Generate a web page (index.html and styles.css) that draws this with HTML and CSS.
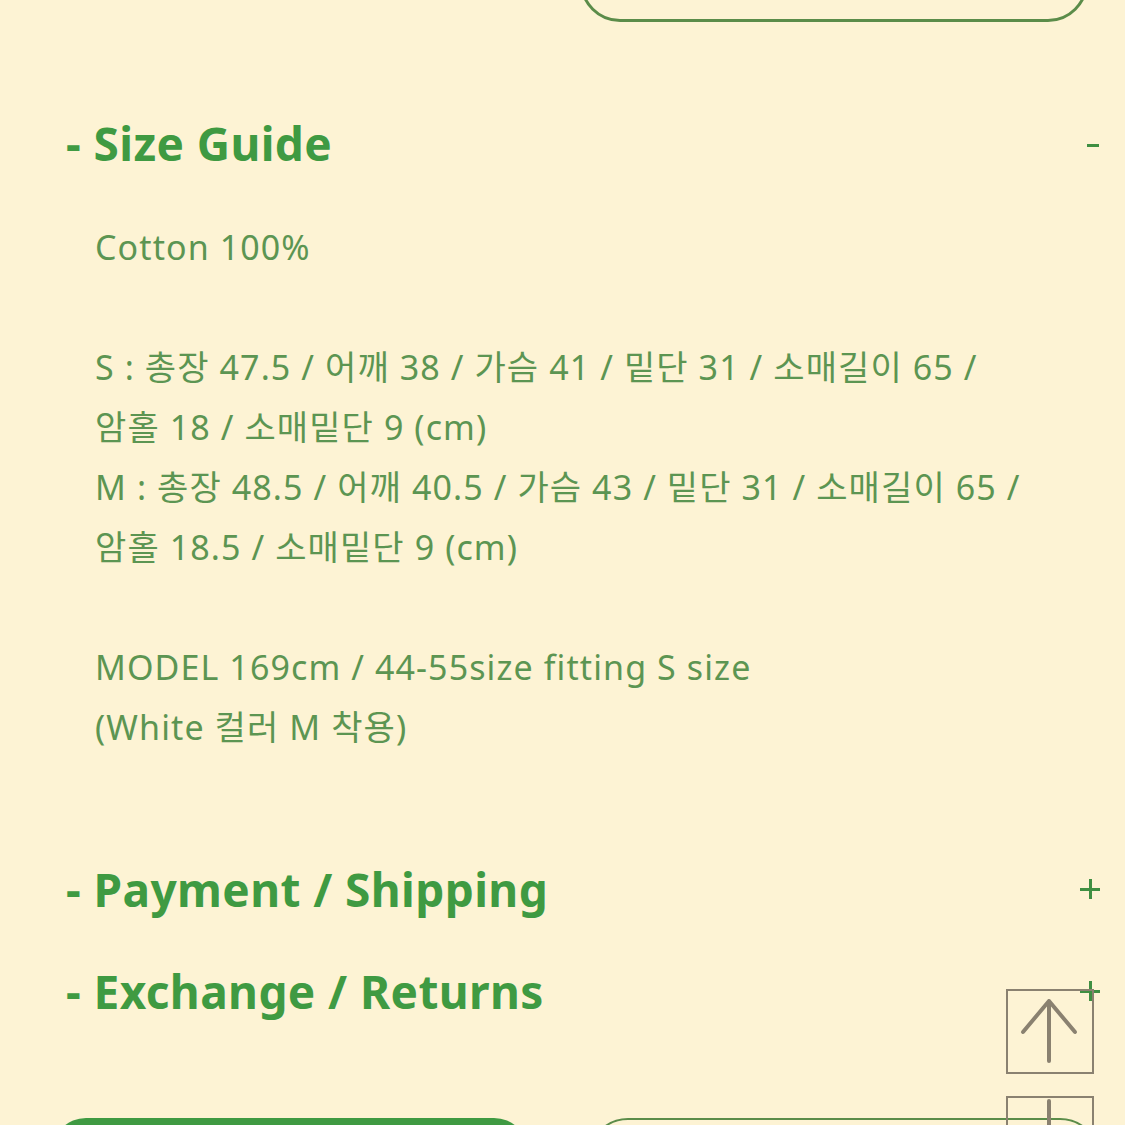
FILE: index.html
```html
<!DOCTYPE html>
<html lang="ko">
<head>
  <meta charset="UTF-8" />
  <meta name="viewport" content="width=device-width, initial-scale=1.0"/>
  <title>Product Info</title>
  <link rel="stylesheet" href="styles.css">
</head>
<body>
  <div class="page">
    <div class="top-actions">
      <div class="btn-outline top-btn"></div>
    </div>

    <div class="info">
      <div class="info-item open">
        <div class="info-head">
          <span class="info-title">- Size Guide</span>
          <span class="toggle minus"></span>
        </div>
        <div class="info-body">
          <p>Cotton 100%</p>
          <p>S : 총장 47.5 / 어깨 38 / 가슴 41 / 밑단 31 / 소매길이 65 /<br>
          암홀 18 / 소매밑단 9 (cm)<br>
          M : 총장 48.5 / 어깨 40.5 / 가슴 43 / 밑단 31 / 소매길이 65 /<br>
          암홀 18.5 / 소매밑단 9 (cm)</p>
          <p>MODEL 169cm / 44-55size fitting S size<br>
          (White 컬러 M 착용)</p>
        </div>
      </div>

      <div class="info-item">
        <div class="info-head">
          <span class="info-title">- Payment / Shipping</span>
          <span class="toggle plus"></span>
        </div>
      </div>

      <div class="info-item">
        <div class="info-head">
          <span class="info-title">- Exchange / Returns</span>
          <span class="toggle plus"></span>
        </div>
      </div>
    </div>

    <div class="bottom-actions">
      <div class="btn-fill"></div>
      <div class="btn-outline"></div>
    </div>
  </div>

  <div class="scroll-btns">
    <div class="scroll-btn">
      <svg width="84" height="81" viewBox="0 0 84 81"><path d="M41 70V10M15 41L41 10L67 41" fill="none" stroke="#8a8170" stroke-width="4" stroke-linecap="round" stroke-linejoin="round"/></svg>
    </div>
    <div class="scroll-btn">
      <svg width="84" height="81" viewBox="0 0 84 81"><path d="M41 3V63M15 32L41 63L67 32" fill="none" stroke="#8a8170" stroke-width="4" stroke-linecap="round" stroke-linejoin="round"/></svg>
    </div>
  </div>
</body>
</html>
```

FILE: styles.css
```css
body {
  margin: 0;
  background-color: #fdf3d4;
  font-family: 'Noto Sans', 'Noto Sans CJK KR', sans-serif;
  overflow: hidden;
}
.page {
  height: 1125px;
  overflow: hidden;
}
.top-actions {
  display: flex;
  justify-content: flex-end;
  padding-right: 37px;
  margin-top: -58px;
}
.btn-outline {
  height: 80px;
  border: 3px solid #5b8c49;
  border-radius: 42px;
  box-sizing: border-box;
}
.top-btn {
  width: 508px;
}
.info {
  padding: 91px 25px 0 66px;
}
.info-head {
  display: flex;
  justify-content: space-between;
  align-items: center;
  height: 60px;
}
.info-title {
  font-size: 46px;
  font-weight: 700;
  color: #3f9a42;
  letter-spacing: 0.4px;
}
.toggle {
  position: relative;
  width: 20px;
  height: 20px;
}
.toggle::before,
.toggle::after {
  content: '';
  position: absolute;
  background: #3f8f42;
}
.toggle::before {
  left: 0;
  top: 9px;
  width: 20px;
  height: 3px;
}
.plus::after {
  left: 9px;
  top: 0;
  width: 3px;
  height: 20px;
}
.minus {
  width: 12px;
  margin-right: 1px;
}
.minus::before {
  width: 12px;
  top: 11px;
}
.info-body {
  padding: 44px 0 60px 29px;
  color: #5c9552;
  font-size: 34px;
  line-height: 60px;
  letter-spacing: 1.1px;
}
.info-body p {
  margin: 0 0 60px;
}
.info-body p:last-child {
  margin-bottom: 0;
}
.info-item + .info-item {
  margin-top: 42px;
}
.bottom-actions {
  display: flex;
  gap: 60px;
  padding: 97px 25px 0 52px;
}
.bottom-actions > div {
  height: 80px;
  box-sizing: border-box;
}
.btn-fill {
  width: 476px;
  background: #3f9a42;
  border-radius: 34px;
}
.bottom-actions .btn-outline {
  flex: 1;
  border-width: 2px;
}
.scroll-btns {
  position: fixed;
  right: 31px;
  top: 989px;
  display: flex;
  flex-direction: column;
  gap: 22px;
}
.scroll-btn {
  width: 88px;
  height: 85px;
  border: 2px solid #8a8170;
  box-sizing: border-box;
  display: flex;
  align-items: center;
  justify-content: center;
}
```
